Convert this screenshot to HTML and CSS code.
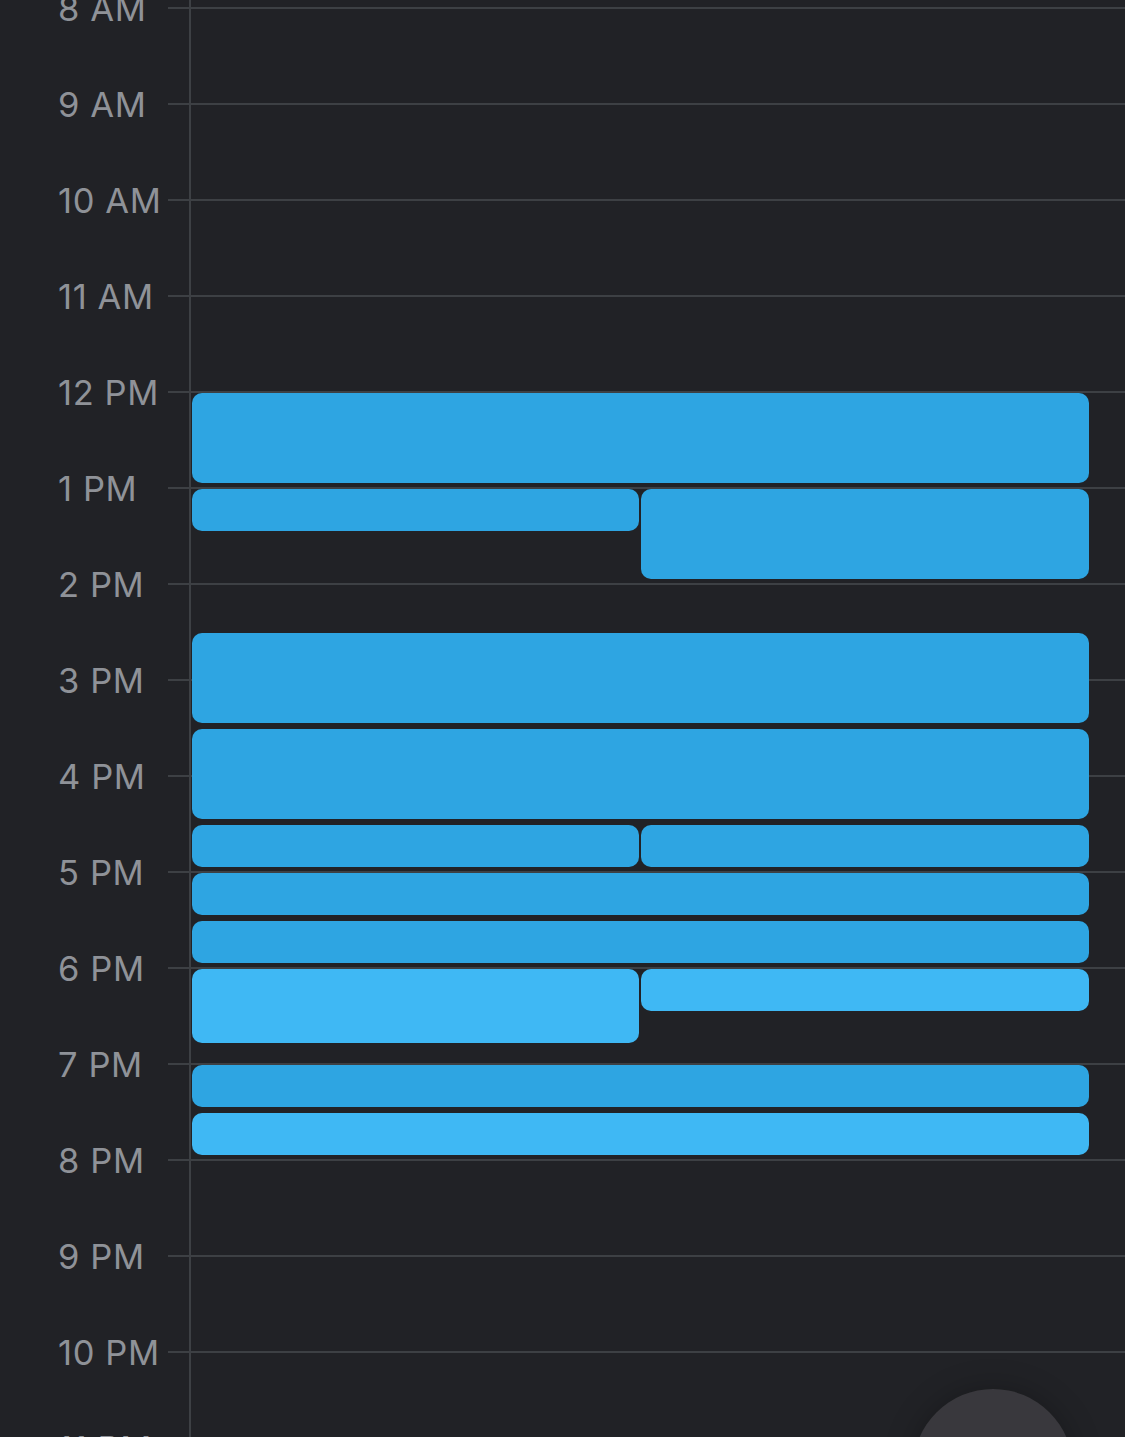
FILE: index.html
```html
<!DOCTYPE html>
<html>
<head>
<meta charset="utf-8">
<link rel="stylesheet" href="styles.css">
</head>
<body>
<div class="calendar">
  <div class="hours">
    <div class="hour"><span class="label">8 AM</span><span class="line"></span></div>
    <div class="hour"><span class="label">9 AM</span><span class="line"></span></div>
    <div class="hour"><span class="label">10 AM</span><span class="line"></span></div>
    <div class="hour"><span class="label">11 AM</span><span class="line"></span></div>
    <div class="hour"><span class="label">12 PM</span><span class="line"></span></div>
    <div class="hour"><span class="label">1 PM</span><span class="line"></span></div>
    <div class="hour"><span class="label">2 PM</span><span class="line"></span></div>
    <div class="hour"><span class="label">3 PM</span><span class="line"></span></div>
    <div class="hour"><span class="label">4 PM</span><span class="line"></span></div>
    <div class="hour"><span class="label">5 PM</span><span class="line"></span></div>
    <div class="hour"><span class="label">6 PM</span><span class="line"></span></div>
    <div class="hour"><span class="label">7 PM</span><span class="line"></span></div>
    <div class="hour"><span class="label">8 PM</span><span class="line"></span></div>
    <div class="hour"><span class="label">9 PM</span><span class="line"></span></div>
    <div class="hour"><span class="label">10 PM</span><span class="line"></span></div>
    <div class="hour"><span class="label">11 PM</span><span class="line"></span></div>
  </div>
  <div class="divider"></div>
  <div class="events">
    <div class="event full dark" style="top:393px;height:90px"></div>
    <div class="event left dark" style="top:489px;height:42px"></div>
    <div class="event right dark" style="top:489px;height:90px"></div>
    <div class="event full dark" style="top:633px;height:90px"></div>
    <div class="event full dark" style="top:729px;height:90px"></div>
    <div class="event left dark" style="top:825px;height:42px"></div>
    <div class="event right dark" style="top:825px;height:42px"></div>
    <div class="event full dark" style="top:873px;height:42px"></div>
    <div class="event full dark" style="top:921px;height:42px"></div>
    <div class="event left light" style="top:969px;height:74px"></div>
    <div class="event right light" style="top:969px;height:42px"></div>
    <div class="event full dark" style="top:1065px;height:42px"></div>
    <div class="event full light" style="top:1113px;height:42px"></div>
  </div>
  <div class="fab"></div>
</div>
</body>
</html>
```
FILE: styles.css
```css
html, body {
  margin: 0;
  padding: 0;
  background: #212226;
}
.calendar {
  position: relative;
  width: 1125px;
  height: 1437px;
  overflow: hidden;
  font-family: "Inter", "Roboto", "Liberation Sans", sans-serif;
}
.hours {
  display: flex;
  flex-direction: column;
  margin-top: -40px;
}
.hour {
  height: 96px;
  display: flex;
  align-items: center;
}
.label {
  width: 110px;
  padding-left: 58px;
  font-size: 34.5px;
  letter-spacing: 0.6px;
  color: #8f9298;
  white-space: nowrap;
  line-height: 1;
  position: relative;
  top: 1px;
}
.line {
  flex: 1;
  height: 2px;
  background: #3d4044;
}
.divider {
  position: absolute;
  left: 189px;
  top: 0;
  width: 2px;
  height: 100%;
  background: #3d4044;
}
.events {
  position: absolute;
  left: 192px;
  top: 0;
  width: 897px;
  height: 100%;
}
.event {
  position: absolute;
  border-radius: 10px;
}
.full { left: 0; width: 897px; }
.left { left: 0; width: 447px; }
.right { left: 449px; width: 448px; }
.dark { background: #2ea5e2; }
.light { background: #3fb8f4; }
.fab {
  position: absolute;
  left: 913px;
  top: 1389px;
  width: 160px;
  height: 160px;
  border-radius: 50%;
  background: #39383d;
  box-shadow: 0 0 30px rgba(0, 0, 0, 0.25);
}
```
